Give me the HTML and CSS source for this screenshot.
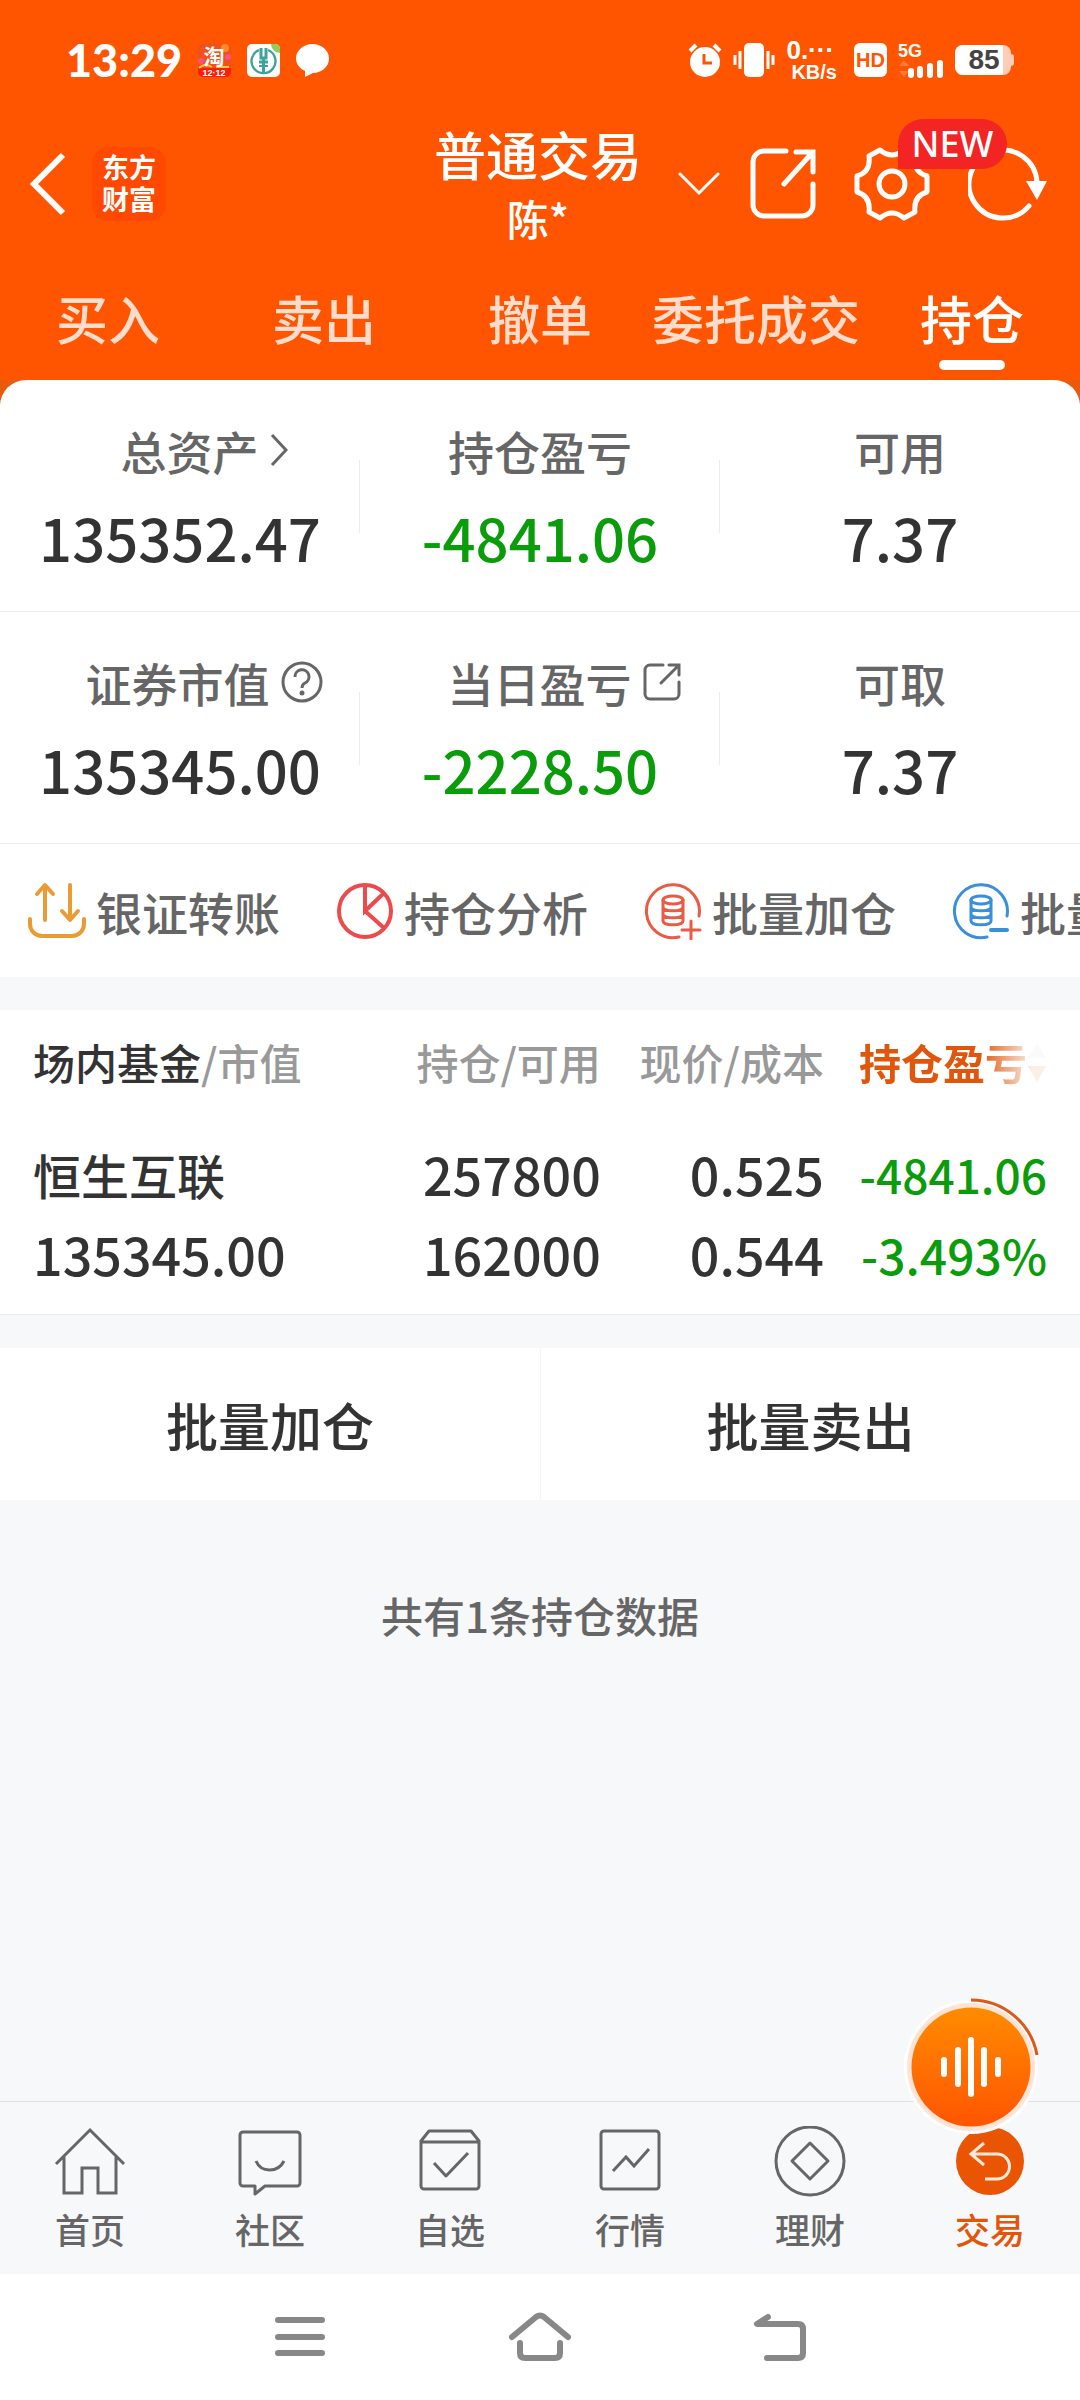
FILE: index.html
```html
<!DOCTYPE html>
<html lang="zh-CN">
<head>
<meta charset="utf-8">
<meta name="viewport" content="width=device-width, initial-scale=1">
<title>普通交易</title>
<link rel="stylesheet" href="styles.css">
</head>
<body>
<div class="app">
  <header class="top">
    <div class="status">
      <div class="status-side">
        <span class="clock">13:29</span>
        <svg class="app-icon" width="33" height="33" viewBox="0 0 33 33">
          <rect width="33" height="33" rx="5" fill="#f0501e"/>
          <path d="M0 24h33v4a5 5 0 0 1-5 5H5a5 5 0 0 1-5-5z" fill="#f91e0a"/>
          <circle cx="27" cy="4" r="4" fill="#fb8a2a"/><circle cx="30" cy="13" r="3" fill="#f7547d"/><circle cx="3" cy="17" r="3" fill="#f7547d"/>
          <path d="M1 24c4-4 8-4 13-1M18 23l13 0" stroke="#f8c53c" stroke-width="2" fill="none"/>
          <text x="16" y="20" text-anchor="middle" class="icon-tao">淘</text>
          <text x="16" y="32" text-anchor="middle" class="icon-date">12·12</text>
        </svg>
        <svg class="app-icon" width="33" height="33" viewBox="0 0 33 33">
          <rect width="33" height="33" rx="5" fill="#fff"/>
          <path d="M24 0h4a5 5 0 0 1 5 5v4a9 9 0 0 1-9-9z" fill="#8bd05c"/>
          <g fill="none" stroke="#3fa39d"><path d="M12 6a12 12 0 1 0 9 0" stroke-width="2.400"/><path d="M14 4v10h5V4M16.500 14v15M12 18h9" stroke-width="3"/><path d="M12 22h9" stroke-width="2"/></g>
        </svg>
        <svg class="app-icon" width="33" height="33" viewBox="0 0 33 33"><path d="M16.500 0C25.600 0 33 6.500 33 14.500S26 29 17 29l-8 4 0-6C4 25 0 20 0 14.500 0 6.500 7.400 0 16.500 0z" fill="#fff"/></svg>
      </div>
      <div class="status-side status-right">
        <svg width="34" height="34" viewBox="0 0 34 34"><circle cx="17" cy="19" r="15" fill="#fff"/><path d="M2 8l6-6M32 8l-6-6" stroke="#fff" stroke-width="4"/><path d="M16 11v9h8" fill="none" stroke="#ff5500" stroke-width="3"/></svg>
        <svg width="42" height="34" viewBox="0 0 42 34"><rect x="11" y="0" width="20" height="34" rx="5" fill="#fff"/><path d="M2 12v10M7 8v18M35 8v18M40 12v10" stroke="#fff" stroke-width="3"/></svg>
        <span class="net"><span>0.···</span><span class="net-unit">KB/s</span></span>
        <span class="hd">HD</span>
        <span class="cell"><span class="cell-label">5G</span>
          <svg width="46" height="18" viewBox="0 0 46 18"><path d="M1 6l5-6 5 6zM1 11l5 6 5-6z" fill="#ff7a3c"/><path d="M13 11v4M22 9v6M32 6v9M42 3v12" stroke="#fff" stroke-width="6" stroke-linecap="round"/></svg>
        </span>
        <span class="battery"><span class="battery-body"><span class="battery-level">85</span></span><span class="battery-tip"></span></span>
      </div>
    </div>
    <div class="titlebar">
      <div class="title-left">
        <button class="icon-btn" aria-label="返回"><svg width="38" height="64" viewBox="0 0 38 64"><path d="M35 3L6 32l29 29" fill="none" stroke="#fff" stroke-width="6"/></svg></button>
        <span class="logo">东方<br>财富</span>
      </div>
      <div class="title-center">
        <h1>普通交易</h1>
        <p>陈*</p>
      </div>
      <div class="title-right">
        <button class="icon-btn switch" aria-label="切换账户"><svg width="42" height="24" viewBox="0 0 42 24"><path d="M2 2l19 19L40 2" fill="none" stroke="#fff" stroke-width="3" stroke-linecap="round"/></svg></button>
        <button class="icon-btn" aria-label="分享"><svg width="66" height="72" viewBox="0 0 66 72"><path d="M36 3H14A11 11 0 0 0 3 14v43a11 11 0 0 0 11 11h38a11 11 0 0 0 11-11V36M46 4h17v20M62 5L34 36" fill="none" stroke="#fff" stroke-width="5" stroke-linecap="round" stroke-linejoin="miter"/></svg></button>
        <button class="icon-btn gear" aria-label="设置">
          <svg width="76" height="74" viewBox="0 0 76 74"><path d="M26 3Q38 13 50 3L61 9Q59 25 73 29V45Q59 49 61 65L50 71Q38 61 26 71L15 65Q17 49 3 45V29Q17 25 15 9Z" fill="none" stroke="#fff" stroke-width="5" stroke-linejoin="round"/><circle cx="38" cy="37" r="13" fill="none" stroke="#fff" stroke-width="5"/></svg>
          <span class="badge">NEW</span>
        </button>
        <button class="icon-btn" aria-label="刷新"><svg width="80" height="74" viewBox="0 0 80 74"><path d="M61 59A34 34 0 1 1 69 36" fill="none" stroke="#fff" stroke-width="5" stroke-linecap="round"/><path d="M58 34h21L69 53z" fill="#fff"/></svg></button>
      </div>
    </div>
    <nav class="tabs">
      <a href="#buy">买入</a><a href="#sell">卖出</a><a href="#cancel">撤单</a><a href="#orders">委托成交</a><a href="#hold" class="active">持仓</a>
    </nav>
  </header>

  <main>
    <div class="panel-wrap"><section class="panel">
      <div class="stats">
        <div class="stat"><div class="stat-label with-icon">总资产<svg width="18" height="34" viewBox="0 0 18 34"><path d="M2 2l14 15L2 32" fill="none" stroke="#666" stroke-width="3"/></svg></div><div class="num">135352.47</div></div>
        <div class="stat"><div class="stat-label">持仓盈亏</div><div class="num down">-4841.06</div></div>
        <div class="stat"><div class="stat-label">可用</div><div class="num">7.37</div></div>
      </div>
      <div class="stats">
        <div class="stat"><div class="stat-label with-icon">证券市值<svg width="42" height="42" viewBox="0 0 42 42"><circle cx="21" cy="21" r="19" fill="none" stroke="#666" stroke-width="3"/><path d="M14 16a7 7 0 1 1 10 6c-2 1-3 2-3 5" fill="none" stroke="#666" stroke-width="3"/><circle cx="21" cy="32" r="2.500" fill="#666"/></svg></div><div class="num">135345.00</div></div>
        <div class="stat"><div class="stat-label with-icon">当日盈亏<svg width="38" height="38" viewBox="0 0 38 38"><path d="M20 2H7a5 5 0 0 0-5 5v24a5 5 0 0 0 5 5h24a5 5 0 0 0 5-5V19M26 2h10v10M35 3L18 20" fill="none" stroke="#666" stroke-width="3" stroke-linecap="round"/></svg></div><div class="num down">-2228.50</div></div>
        <div class="stat"><div class="stat-label">可取</div><div class="num">7.37</div></div>
      </div>
      <nav class="quick">
        <a href="#transfer"><svg width="58" height="58" viewBox="0 0 58 58"><path d="M17 38V4M9 12l8-9 8 9M42 3v34M34 29l8 9 8-9M2 37v5a12 12 0 0 0 12 12h30a12 12 0 0 0 12-12v-5" fill="none" stroke="#eb9b33" stroke-width="4" stroke-linecap="round" stroke-linejoin="round"/></svg>银证转账</a>
        <a href="#analysis"><svg width="58" height="58" viewBox="0 0 58 58"><circle cx="29" cy="29" r="26" fill="none" stroke="#ec4a4c" stroke-width="4"/><path d="M29 3v26L48 11M29 29l19 17" fill="none" stroke="#ec4a4c" stroke-width="4"/></svg>持仓分析</a>
        <a href="#batch-add"><svg width="58" height="58" viewBox="0 0 58 58"><g fill="none" stroke="#e95b45" stroke-width="3" stroke-linecap="round"><path d="M35 55A26.500 26.500 0 1 1 55 34"/><ellipse cx="29" cy="18" rx="10" ry="4"/><path d="M19 18v21c0 5 20 5 20 0V18M19 25c0 5 20 5 20 0M19 32c0 5 20 5 20 0M47 39v18M38 48h18"/></g></svg>批量加仓</a>
        <a href="#batch-sell"><svg width="58" height="58" viewBox="0 0 58 58"><g fill="none" stroke="#3a8fdc" stroke-width="3" stroke-linecap="round"><path d="M35 55A26.500 26.500 0 1 1 55 34"/><ellipse cx="29" cy="18" rx="10" ry="4"/><path d="M19 18v21c0 5 20 5 20 0V18M19 25c0 5 20 5 20 0M19 32c0 5 20 5 20 0"/><path d="M39 48h16" stroke-width="4"/></g></svg>批量卖出</a>
      </nav>
    </section></div>

    <section class="holdings">
      <table>
        <thead><tr>
          <th><b>场内基金</b>/市值</th><th>持仓/可用</th><th>现价/成本</th>
          <th class="sorted"><span class="fade">持仓盈亏<svg width="20" height="42" viewBox="0 0 20 42"><path d="M1 17L10 2l9 15z" fill="#ccc"/><path d="M1 25h18L10 41z" fill="#ee5a0c"/></svg></span></th>
        </tr></thead>
        <tbody>
          <tr><td class="name">恒生互联</td><td>257800</td><td>0.525</td><td class="down amount">-4841.06</td></tr>
          <tr><td>135345.00</td><td>162000</td><td>0.544</td><td class="down rate">-3.493%</td></tr>
        </tbody>
      </table>
    </section>

    <div class="batch"><button>批量加仓</button><button>批量卖出</button></div>
    <p class="summary">共有1条持仓数据</p>
  </main>

  <footer class="bottom">
    <button class="voice" aria-label="语音助手"><svg width="140" height="142" viewBox="0 0 140 142">
      <defs><linearGradient id="voice-fill" x1="0" y1="0" x2="0" y2="1"><stop offset="0" stop-color="#ff8c00"/><stop offset="1" stop-color="#ff5500"/></linearGradient></defs>
      <circle cx="70" cy="71" r="67" fill="#fff"/><circle cx="70" cy="71" r="64" fill="#ffe3d5"/><circle cx="70" cy="71" r="59.500" fill="url(#voice-fill)"/>
      <path d="M70 4a67 67 0 0 1 66 55" fill="none" stroke="#d95a1b" stroke-width="3"/>
      <path d="M43 64v14M57 54v34M70 44v54M83 54v34M97 64v14" stroke="#fff" stroke-width="6" stroke-linecap="round"/></svg></button>
    <nav class="tabbar">
      <a href="#home"><svg width="74" height="72" viewBox="0 0 74 72"><path d="M3 38L37 4l34 34M11 31v36h18V42h16v25h18V31" fill="none" stroke="#666" stroke-width="3"/></svg>首页</a>
      <a href="#community"><svg width="74" height="72" viewBox="0 0 74 72"><path d="M10 6h54a3 3 0 0 1 3 3v48a3 3 0 0 1-3 3H32l-10 8v-8H10a3 3 0 0 1-3-3V9a3 3 0 0 1 3-3zM23 35c5 12 22 12 28 0" fill="none" stroke="#666" stroke-width="3" stroke-linejoin="round"/></svg>社区</a>
      <a href="#watch"><svg width="74" height="72" viewBox="0 0 74 72"><path d="M8 15l8-10h42l8 10v45a3 3 0 0 1-3 3H11a3 3 0 0 1-3-3zM8 16h58M21 37l12 13 22-23" fill="none" stroke="#666" stroke-width="3" stroke-linejoin="round"/></svg>自选</a>
      <a href="#market"><svg width="74" height="72" viewBox="0 0 74 72"><rect x="8" y="5" width="58" height="58" rx="3" fill="none" stroke="#666" stroke-width="3"/><path d="M20 45l13-14 8 9 15-17" fill="none" stroke="#666" stroke-width="3"/></svg>行情</a>
      <a href="#wealth"><svg width="74" height="72" viewBox="0 0 74 72"><circle cx="37" cy="35" r="34" fill="none" stroke="#666" stroke-width="3"/><path d="M37 17l18 18-18 18-18-18z" fill="none" stroke="#666" stroke-width="3" stroke-linejoin="round"/></svg>理财</a>
      <a href="#trade" class="active"><svg width="74" height="72" viewBox="0 0 74 72"><circle cx="37" cy="35" r="34" fill="#ea5504"/><path d="M31 17L18 28l13 11M18 28h26a12 12 0 0 1 0 25H32" fill="none" stroke="#ffe9dc" stroke-width="3"/></svg>交易</a>
    </nav>
    <div class="sysbar">
      <button class="icon-btn" aria-label="最近任务"><svg width="64" height="50" viewBox="0 0 64 50"><path d="M10 8h44M10 25h44M10 41h44" stroke="#888" stroke-width="6" stroke-linecap="round"/></svg></button>
      <button class="icon-btn" aria-label="主屏幕"><svg width="64" height="50" viewBox="0 0 64 50"><path d="M4 25L28 5q4-3 8 0l24 20M12 31v10q0 5 5 5h30q5 0 5-5V31" fill="none" stroke="#888" stroke-width="6" stroke-linecap="round"/></svg></button>
      <button class="icon-btn" aria-label="返回上级"><svg width="64" height="50" viewBox="0 0 64 50"><path d="M20 5L9 12h41q5 0 5 5v24q0 5-5 5H19" fill="none" stroke="#888" stroke-width="6" stroke-linecap="round" stroke-linejoin="round"/></svg></button>
    </div>
  </footer>
</div>
</body>
</html>
```

FILE: styles.css
```css
* { box-sizing: border-box; margin: 0; padding: 0; }
body {
  font-family: "Noto Sans CJK SC", sans-serif;
  font-weight: 500;
  color: #333;
  background: #f7f8fa;
}
button { font: inherit; color: inherit; background: none; border: 0; cursor: pointer; }
a { color: inherit; text-decoration: none; }
svg { display: block; flex: none; }
.app { min-height: 100vh; display: flex; flex-direction: column; overflow-x: hidden; }
main { flex: 1; }

.top { background: #ff5500; color: #fff; }
.status {
  height: 120px;
  padding: 0 66px;
  display: flex;
  align-items: center;
  justify-content: space-between;
}
.status-side { display: flex; align-items: center; gap: 16px; }
.app-icon { overflow: visible; }
.clock { font: 900 45px/60px Lato, sans-serif; }
.icon-tao { font-size: 21px; font-weight: 700; fill: #fff; }
.icon-date { font: 700 9px "Liberation Sans", sans-serif; fill: #fff; }
.status-right { gap: 11px; }
.net { display: flex; flex-direction: column; font: 700 26px/24px "Liberation Sans", sans-serif; }
.net-unit { padding-left: 5px; font-size: 20px; line-height: 20px; }
.hd {
  width: 33px; height: 34px; margin-left: 6px;
  border-radius: 6px;
  background: #fff; color: #ff5500;
  font: 700 20px/34px "Liberation Sans", sans-serif;
  text-align: center;
}
.cell { display: flex; flex-direction: column; }
.cell-label { font: 700 18px/18px "Liberation Sans", sans-serif; }
.battery { display: flex; align-items: center; }
.battery-body {
  width: 56px; height: 30px;
  border-radius: 8px;
  background: #ffcdb5;
  overflow: hidden;
}
.battery-tip { width: 3px; height: 12px; border-radius: 0 3px 3px 0; background: #ffcdb5; }
.battery-level {
  display: block;
  width: 85%;
  background: #fff; color: #444;
  font: 700 28px/30px "Liberation Sans", sans-serif;
  text-align: right;
  padding-right: 3px;
}

.titlebar {
  height: 120px;
  padding: 0 32px 0 28px;
  display: grid;
  grid-template-columns: 1fr auto 1fr;
  align-items: center;
}
.icon-btn { display: block; flex: none; position: relative; }
.title-left, .title-right { display: flex; align-items: center; }
.title-left { gap: 26px; }
.title-right { justify-content: flex-end; gap: 38px; }
.switch { margin-right: -8px; }
.logo {
  width: 74px; height: 74px;
  padding-top: 4px;
  border-radius: 16px;
  background: #ff4800;
  font: 700 27px/32px "Noto Sans CJK SC", sans-serif;
  text-align: center;
}
.title-center { text-align: center; }
.title-center h1 { font-size: 52px; line-height: 68px; font-weight: 500; }
.title-center p { font-size: 42px; line-height: 60px; }
.badge {
  position: absolute;
  left: 44px; top: -28px;
  width: 109px; height: 50px;
  border-radius: 25px 25px 25px 0;
  background: #f22424;
  font: 500 36px/50px "Noto Sans", sans-serif;
  z-index: 1;
}

.tabs { display: grid; grid-template-columns: repeat(5, 1fr); height: 140px; padding-top: 38px; }
.tabs a {
  display: flex;
  flex-direction: column;
  align-items: center;
  font-size: 52px;
  line-height: 80px;
  color: #ffdccb;
}
.tabs .active { color: #fff; }
.tabs .active::after { content: ""; width: 66px; height: 10px; border-radius: 5px; background: #fff; margin-top: 2px; }

.panel-wrap { background: linear-gradient(#e85a0c 24px, #fff 24px); }
.panel { background: #fff; border-radius: 26px 26px 0 0; }
.stats {
  display: grid;
  grid-template-columns: repeat(3, 1fr);
  height: 232px;
  align-items: center;
  border-bottom: 1px solid #eaebed;
}
.stat { position: relative; text-align: center; }
.stat + .stat::before {
  content: "";
  position: absolute;
  left: -1px; top: 45px;
  width: 1px; height: 73px;
  background: #eaebed;
}
.stat-label {
  display: flex;
  justify-content: center;
  align-items: center;
  gap: 11px;
  font-size: 46px;
  line-height: 70px;
  color: #666;
}
.stat-label.with-icon { padding-left: 48px; }
.num { font-size: 58px; line-height: 80px; margin-top: 12px; }
.down { color: #0a9c0a; }

.quick {
  display: flex;
  gap: 56px;
  height: 133px;
  padding: 0 28px;
  overflow: hidden;
}
.quick a {
  display: flex;
  flex: none;
  align-items: center;
  gap: 10px;
  font-size: 46px;
  color: #666;
  white-space: nowrap;
}

.holdings {
  margin-top: 33px;
  padding: 12px 33px 20px;
  background: #fff;
  border-bottom: 1px solid #eaebed;
}
table { width: 100%; border-collapse: collapse; table-layout: fixed; }
th, td { text-align: right; font-weight: 500; white-space: nowrap; width: 22%; }
th:first-child, td:first-child { text-align: left; width: 34%; }
th { font-size: 42px; line-height: 80px; height: 112px; vertical-align: top; color: #999; }
th b { font-weight: 500; color: #333; }
td { font-size: 52px; height: 80px; line-height: 80px; }
td.name { font-size: 48px; }
td.amount { font-size: 46px; }
td.rate { font-size: 48px; }
.sorted { color: #e0560c; }
.sorted .fade { font-weight: 700; }
.fade {
  display: inline-flex;
  align-items: center;
  mask-image: linear-gradient(to right, #000 64%, rgba(0, 0, 0, 0.1) 92%);
}

.batch { display: grid; grid-template-columns: 1fr 1fr; margin-top: 33px; background: #fff; }
.batch button { height: 152px; font-size: 52px; }
.batch button + button { border-left: 1px solid #f4f5f6; }
.summary { padding-top: 85px; text-align: center; font-size: 42px; line-height: 60px; color: #666; }

.bottom { position: relative; }
.voice { position: absolute; right: 39px; top: -105px; }
.tabbar {
  display: grid;
  grid-template-columns: repeat(6, 1fr);
  height: 173px;
  padding-top: 24px;
  border-top: 1px solid #e0e1e4;
  background: #f7f8fa;
}
.tabbar a {
  display: flex;
  flex-direction: column;
  align-items: center;
  gap: 7px;
  font-size: 35px;
  line-height: 48px;
  color: #666;
}
.tabbar .active { color: #e0560c; }
.sysbar {
  height: 126px;
  padding: 0 180px;
  background: #fff;
  display: grid;
  grid-template-columns: repeat(3, 1fr);
  align-items: center;
  justify-items: center;
}
```
